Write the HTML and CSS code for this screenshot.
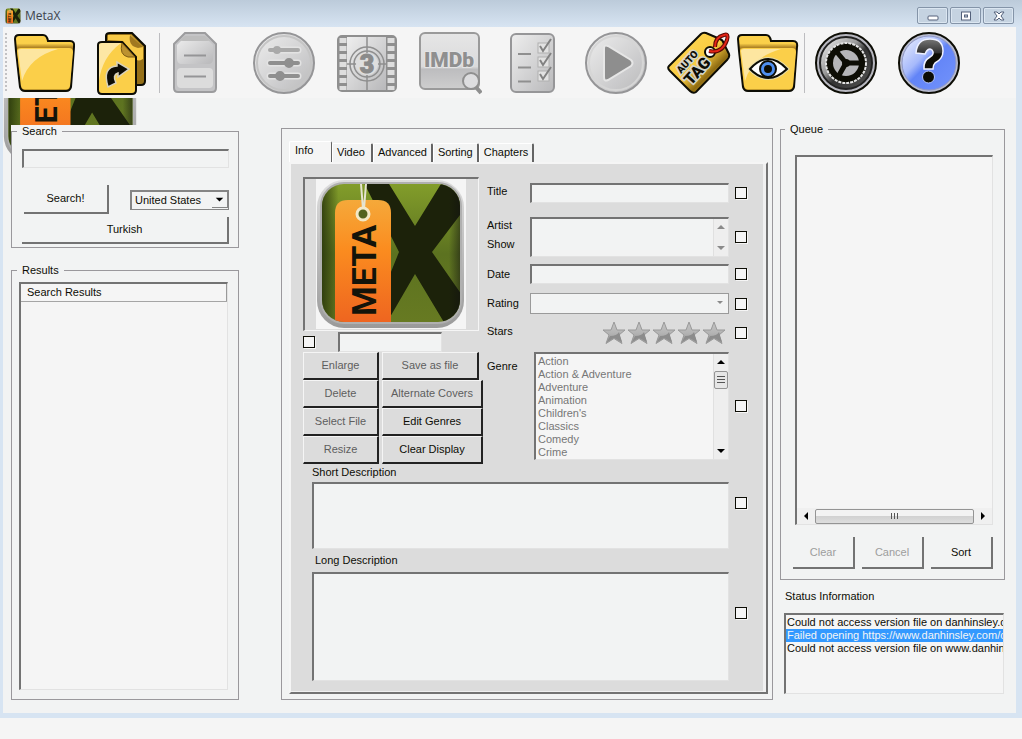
FILE: index.html
```html
<!DOCTYPE html>
<html lang="en">
<head>
<meta charset="utf-8">
<title>MetaX</title>
<link rel="stylesheet" href="styles.css">
</head>
<body>
<svg class="defs" width="0" height="0" aria-hidden="true">
  <defs>
    <linearGradient id="green" x1="0" y1="0" x2="0" y2="1"><stop offset="0" stop-color="#85a02b"/><stop offset=".5" stop-color="#5c7220"/><stop offset="1" stop-color="#687b22"/></linearGradient>
    <linearGradient id="orange" x1="0" y1="0" x2="0" y2="1"><stop offset="0" stop-color="#f5a93a"/><stop offset=".4" stop-color="#fb8c1f"/><stop offset="1" stop-color="#ee6420"/></linearGradient>
    <linearGradient id="edge" x1="0" y1="0" x2="1" y2="0"><stop offset="0" stop-color="#25320a" stop-opacity=".8"/><stop offset=".12" stop-color="#25320a" stop-opacity="0"/><stop offset=".92" stop-color="#111" stop-opacity="0"/><stop offset="1" stop-color="#111" stop-opacity=".5"/></linearGradient>
    <linearGradient id="rim" x1="0" y1="0" x2="0" y2="1"><stop offset="0" stop-color="#dedede"/><stop offset="1" stop-color="#9a9a9a"/></linearGradient>
    <linearGradient id="gold" x1="0" y1="0" x2="1" y2="1"><stop offset="0" stop-color="#fff0b8"/><stop offset=".42" stop-color="#fbdd7c"/><stop offset=".43" stop-color="#fbd04a"/><stop offset="1" stop-color="#fbcb40"/></linearGradient>
    <linearGradient id="goldtag" x1="0" y1="0" x2="1" y2="1"><stop offset="0" stop-color="#ffdc5c"/><stop offset=".5" stop-color="#f9cb40"/><stop offset=".68" stop-color="#8f6c12"/><stop offset=".9" stop-color="#f0c846"/></linearGradient>
    <linearGradient id="brown" x1="0" y1="0" x2="0" y2="1"><stop offset="0" stop-color="#fbd04a"/><stop offset=".15" stop-color="#fbd04a"/><stop offset=".22" stop-color="#b08424"/><stop offset="1" stop-color="#8a6514"/></linearGradient>
    <linearGradient id="gray" x1="0" y1="0" x2="1" y2="1"><stop offset="0" stop-color="#eeeeee"/><stop offset=".5" stop-color="#d4d4d5"/><stop offset="1" stop-color="#b8b8ba"/></linearGradient>
    <linearGradient id="grayv" x1="0" y1="0" x2="0" y2="1"><stop offset="0" stop-color="#e6e6e6"/><stop offset=".6" stop-color="#dadadb"/><stop offset=".65" stop-color="#bdbdbf"/><stop offset="1" stop-color="#cecece"/></linearGradient>
    <linearGradient id="dark" x1="0" y1="0" x2="1" y2="1"><stop offset="0" stop-color="#fafafa"/><stop offset=".4" stop-color="#999"/><stop offset=".55" stop-color="#333"/><stop offset="1" stop-color="#555"/></linearGradient>
    <linearGradient id="blue" x1="0" y1="0" x2="1" y2="1"><stop offset="0" stop-color="#f1f4ff"/><stop offset=".38" stop-color="#a6b9fb"/><stop offset=".5" stop-color="#6284f7"/><stop offset="1" stop-color="#7393fb"/></linearGradient>
    <linearGradient id="ink" x1="0" y1="0" x2="0" y2="1"><stop offset="0" stop-color="#777"/><stop offset=".45" stop-color="#333"/><stop offset=".5" stop-color="#0d0d05"/></linearGradient>
    <linearGradient id="starfill" x1="0" y1="0" x2="0" y2="1"><stop offset="0" stop-color="#c4c4c4"/><stop offset=".5" stop-color="#b4b4b4"/><stop offset="1" stop-color="#999"/></linearGradient>
    <clipPath id="tile"><rect x="6" y="5" width="138" height="138" rx="22"/></clipPath>
  </defs>
  <symbol id="logo" viewBox="0 0 150 150">
    <rect x="1" y="1" width="147" height="148" rx="27" fill="url(#rim)"/>
    <rect x="4" y="3" width="142" height="142" rx="24" fill="#b0b0b0"/>
    <g clip-path="url(#tile)">
      <rect width="150" height="150" fill="url(#green)"/>
      <path d="M46 0H70L99 47L128 0H150V28L116 73L150 122V150H132L99 95L70 145H54L83 73Z" fill="#1c220a"/>
      <rect x="6" y="5" width="138" height="138" fill="url(#edge)"/>
      <path d="M19 34Q19 21 32 21H62Q75 21 75 34V145H19Z" fill="url(#orange)"/>
      <path d="M45 5L47 30M50 5L48 30" stroke="#e5e3d0" stroke-width="2" fill="none"/>
      <circle cx="47" cy="35" r="6" fill="#53631f" stroke="#f3e8c6" stroke-width="3"/>
    </g>
    <text class="logo-text" transform="translate(60 137) rotate(-90)">META</text>
  </symbol>
  <symbol id="folder" viewBox="0 0 64 64">
    <path d="M2 8Q2 4 6 4H30Q34 4 35 10H57Q62 10 61 16L58 56Q57 60 53 60H12Q8 60 7 56L3 20Z" fill="url(#brown)" stroke="#0d0d05" stroke-width="2"/>
    <path d="M4 20Q4 17 8 17H56Q60 17 60 21L57 55Q56 58.500 53 58.500H12Q9 58.500 8 55Z" fill="#fbcf49"/>
    <path d="M5 20Q5 18 8 18H45Q16 26 9 50Z" fill="#fff" opacity=".48"/>
  </symbol>
  <symbol id="star" viewBox="0 0 24 24">
    <path d="M12 1L15 9H23L17 14L20 22.500L12 17.500L4 22.500L7 14L1 9H9Z" fill="url(#starfill)" stroke="#999" stroke-width="1"/>
    <path d="M5 21L8 15Q15 15 17 11L20 21L12 17Z" fill="#8c8c8c"/>
  </symbol>
</svg>

<div class="window">
  <header class="titlebar">
    <svg class="app-icon" viewBox="0 0 150 150" aria-hidden="true"><use href="#logo"/></svg>
    <h1 class="app-title">MetaX</h1>
    <div class="window-buttons">
      <button type="button" class="winbtn" aria-label="Minimize"><svg width="14" height="12" viewBox="0 0 14 12"><rect x="2" y="6" width="10" height="4" rx="1" fill="#fff" stroke="#54617a"/></svg></button>
      <button type="button" class="winbtn" aria-label="Maximize"><svg width="14" height="12" viewBox="0 0 14 12"><rect x="2.500" y="2" width="9" height="8" fill="#fff" stroke="#54617a"/><rect x="5.500" y="5" width="3" height="2" fill="#cbd6e2" stroke="#54617a"/></svg></button>
      <button type="button" class="winbtn" aria-label="Close"><svg width="14" height="12" viewBox="0 0 14 12"><path d="M2 2H5L7 4L9 2H12L9 6L12 10H9L7 8L5 10H2L5 6Z" fill="#fff" stroke="#54617a"/></svg></button>
    </div>
  </header>

  <nav class="toolbar" aria-label="Main tools">
    <span class="grip"></span>
    <button type="button" class="tool" aria-label="Open folder"><svg viewBox="0 0 64 64"><use href="#folder"/></svg></button>
    <button type="button" class="tool after-folder" aria-label="Open files"><svg viewBox="0 0 64 64">
      <path d="M16 5Q16 2 20 2H42L55 15V50Q55 54 51 54H20Q16 54 16 50Z" fill="#957018" stroke="#0d0d05" stroke-width="2"/>
      <path d="M18 4H41L53 16V28Q46 32 46 26L33 10L18 9Z" fill="#f7ca48"/><path d="M40 4Q38 15 48 17L53 16Z" fill="#a07820"/>
      <path d="M8 14Q8 11 12 11H32L46 26V59Q46 63 42 63H12Q8 63 8 59Z" fill="#fbcf49" stroke="#0d0d05" stroke-width="2"/>
      <path d="M9 14Q9 12 12 12H31Q12 26 9 50Z" fill="#fff" opacity=".5"/>
      <path d="M32 12Q29 24 38 26L45 26Z" fill="#bc9230" stroke="#7d5b12" stroke-width="1"/>
      <path d="M18 56Q12 36 27 35V31L39 38L28 46V42Q22 44 26 52Z" fill="#0d0d05" stroke="#d7d2bd" stroke-width="1.500"/></svg></button>
    <span class="separator"></span>
    <button type="button" class="tool" aria-label="Save" disabled><svg viewBox="0 0 64 64">
      <path d="M11 13L22 2H42L53 13V57Q53 61 49 61H15Q11 61 11 57Z" fill="#c4c4c6" stroke="#9c9c9e" stroke-width="2"/>
      <path d="M14 14L22 6H42L50 14V28Q50 33 45 33H19Q14 33 14 28Z" fill="url(#gray)"/>
      <path d="M14 12Q16 9 20 10H44Q48 9 50 12L42 5H22Z" fill="#bdbdbd"/>
      <rect x="14" y="37" width="36" height="20" rx="4" fill="#dcdcdc"/>
      <path d="M21 24.500H43M21 45.500H43" stroke="#959597" stroke-width="2"/></svg></button>
    <div class="tool-group">
      <button type="button" class="tool" aria-label="Adjust" disabled><svg viewBox="0 0 64 64">
        <circle cx="32" cy="32" r="30" fill="url(#gray)" stroke="#959597" stroke-width="2"/><circle cx="32" cy="32" r="27" fill="none" stroke="#c5c5c5" stroke-width="2"/>
        <g stroke="#e3e3e3" stroke-width="7" stroke-linecap="round"><path d="M18 19H46M18 32H46M18 45H46"/></g>
        <g stroke="#8f8f8f" fill="#8f8f8f" stroke-width="4" stroke-linecap="round"><path d="M18 32H46M18 45H46"/><path d="M18 19H46" stroke="#a9a9a9"/><circle cx="25" cy="19" r="2" stroke="#a9a9a9"/><circle cx="37" cy="32" r="3"/><circle cx="28" cy="45" r="3"/></g></svg></button>
      <button type="button" class="tool" aria-label="Movie" disabled><svg viewBox="0 0 64 64">
        <rect x="3" y="5" width="58" height="55" rx="4" fill="#8f8f8f" stroke="#8f8f8f" stroke-width="2"/><rect x="12" y="6" width="39" height="53" fill="url(#gray)"/>
        <g stroke="#dedede" stroke-width="7" stroke-dasharray="5 3"><path d="M8 7V59M56 7V59"/></g>
        <g fill="none" stroke="#8f8f8f" stroke-width="1.500"><circle cx="32" cy="33" r="17"/><circle cx="32" cy="33" r="13"/><path d="M12 33H51M32 6V59"/></g>
        <circle cx="32" cy="33" r="11" fill="#dedede"/><text x="32" y="42" class="reel-number">3</text></svg></button>
      <button type="button" class="tool" aria-label="IMDb search" disabled><svg viewBox="0 0 64 64">
        <rect x="2" y="2" width="59" height="56" rx="5" fill="url(#grayv)" stroke="#9a9a9a" stroke-width="2"/>
        <text x="31" y="36" class="imdb-text">IMDb</text><path d="M57 55L63 62" stroke="#8f8f8f" stroke-width="4"/><circle cx="53" cy="50" r="8" fill="#dddddf" stroke="#8f8f8f" stroke-width="2"/></svg></button>
      <button type="button" class="tool" aria-label="Checklist" disabled><svg viewBox="0 0 64 64">
        <rect x="10" y="3" width="43" height="58" rx="5" fill="url(#gray)" stroke="#969698" stroke-width="2"/>
        <path d="M17 23H30M17 36.500H30M17 50.500H30" stroke="#8f8f8f" stroke-width="2"/>
        <g fill="#e2e2e2" stroke="#b0b0b0"><rect x="37" y="12" width="11" height="10"/><rect x="37" y="26" width="11" height="10"/><rect x="37" y="40" width="11" height="10"/></g>
        <g fill="none" stroke="#828282" stroke-width="2"><path d="M39 15L42 20L50 8M39 29L42 34L50 22M39 43L42 48L50 36"/></g></svg></button>
      <button type="button" class="tool" aria-label="Play" disabled><svg viewBox="0 0 64 64">
        <circle cx="32" cy="32" r="30" fill="url(#gray)" stroke="#959597" stroke-width="2"/><circle cx="32" cy="32" r="27" fill="none" stroke="#d6d6d6" stroke-width="2"/>
        <path d="M20 18Q20 13 24 15L47 29Q50 32 47 35L24 49Q20 51 20 46Z" fill="#8e8e8e" stroke="#e6e6e6" stroke-width="2"/></svg></button>
      <button type="button" class="tool" aria-label="Auto tag"><svg viewBox="0 0 64 64">
        <path d="M2 35L34 3Q36 1 39 2L53 8Q56 9 57 13L62 23Q63 26 60 29L29 61Q26 63 23 60L3 40Q0 37 2 35Z" fill="url(#goldtag)" stroke="#0d0d05" stroke-width="2"/>
        <circle cx="43" cy="21" r="5" fill="#fff" stroke="#0d0d05" stroke-width="2"/>
        <path d="M42 20Q55 23 60 9Q62 2 57 4Q48 6 48 16" fill="none" stroke="#5b0904" stroke-width="4"/><path d="M42 20Q55 23 60 9Q62 2 57 4Q48 6 48 16" fill="none" stroke="#e42517" stroke-width="2"/>
        <text transform="translate(14 43) rotate(-48)" class="tag-small">AUTO</text><text transform="translate(24 55) rotate(-48)" class="tag-big">TAG</text></svg></button>
    </div>
    <button type="button" class="tool after-tag" aria-label="Watch folder"><svg viewBox="0 0 64 64"><use href="#folder"/>
      <path d="M14 38Q32 18 51 38Q32 56 14 38Z" fill="#fff" stroke="#e6dca8" stroke-width="4"/><path d="M14 38Q32 18 51 38Q32 56 14 38Z" fill="#fff" stroke="#0d0d05" stroke-width="2"/>
      <circle cx="32" cy="38" r="8" fill="#4f8ff0" stroke="#0d0d05" stroke-width="2"/><circle cx="32" cy="38" r="4" fill="#0d0d05"/></svg></button>
    <span class="separator"></span>
    <div class="tool-group last">
      <button type="button" class="tool" aria-label="Settings"><svg viewBox="0 0 64 64">
        <circle cx="32" cy="32" r="30" fill="#b8b8c0" stroke="#0d0d05" stroke-width="2"/><circle cx="32" cy="32" r="26" fill="url(#dark)" stroke="#222" stroke-width="2"/>
        <circle cx="32" cy="32" r="20" fill="#0d0d05" stroke="#e4e4e4" stroke-width="2" stroke-dasharray="3 1"/>
        <circle cx="32" cy="32" r="13" fill="#b5b5b8"/><path d="M32 32L22 20M32 32H48M32 32L24 46" stroke="#0d0d05" stroke-width="5"/><circle cx="32" cy="32" r="4" fill="#0d0d05"/></svg></button>
      <button type="button" class="tool" aria-label="Help"><svg viewBox="0 0 64 64">
        <circle cx="32" cy="32" r="30" fill="#b9bcce" stroke="#0d0d05" stroke-width="2"/><circle cx="32" cy="32" r="27" fill="url(#blue)" stroke="#8f98c8" stroke-width="1"/>
        <path d="M19 22Q20 8 33 8Q46 8 46 20Q46 28 38 32Q36 34 36 38H27Q26 30 33 26Q38 23 35 19Q31 16 28 23Z" fill="url(#ink)" stroke="#eef1ff" stroke-width="1.500"/><circle cx="31.500" cy="46" r="6" fill="#0d0d05" stroke="#b5c6ff" stroke-width="1"/></svg></button>
    </div>
  </nav>

  <main class="workspace">
    <svg class="backdrop" viewBox="0 0 150 150" aria-hidden="true"><use href="#logo"/></svg>

    <div class="left-column">
      <fieldset class="group search-group">
        <legend>Search</legend>
        <input type="text" class="sunken search-input" aria-label="Search text">
        <div class="search-row">
          <button type="button" class="soft-button">Search!</button>
          <span class="combo"><select class="country" aria-label="Country"><option>United States</option></select><svg class="combo-arrow" viewBox="0 0 16 16" aria-hidden="true"><path d="M4 6H12L8 10Z"/></svg></span>
        </div>
        <button type="button" class="soft-button turkish">Turkish</button>
      </fieldset>
      <fieldset class="group results-group">
        <legend>Results</legend>
        <div class="sunken results"><table class="results-table"><thead><tr><th scope="col">Search Results</th></tr></thead></table></div>
      </fieldset>
    </div>

    <section class="middle-column">
      <div class="tabs" role="tablist">
        <button type="button" role="tab" class="tab active" aria-selected="true">Info</button>
        <button type="button" role="tab" class="tab video">Video</button>
        <button type="button" role="tab" class="tab">Advanced</button>
        <button type="button" role="tab" class="tab">Sorting</button>
        <button type="button" role="tab" class="tab">Chapters</button>
      </div>
      <div class="tab-panel" role="tabpanel">
        <div class="info">
          <div class="cover-side">
            <div class="cover"><svg viewBox="0 0 150 150" role="img" aria-label="MetaX cover"><use href="#logo"/></svg></div>
            <div class="cover-row"><input type="checkbox" aria-label="Use cover"><input type="text" class="sunken cover-input" aria-label="Cover size"></div>
            <div class="button-grid">
              <button type="button" class="hard-button" disabled>Enlarge</button><button type="button" class="hard-button save" disabled>Save as file</button>
              <button type="button" class="hard-button" disabled>Delete</button><button type="button" class="hard-button" disabled>Alternate Covers</button>
              <button type="button" class="hard-button" disabled>Select File</button><button type="button" class="hard-button">Edit Genres</button>
              <button type="button" class="hard-button" disabled>Resize</button><button type="button" class="hard-button">Clear Display</button>
            </div>
          </div>
          <div class="fields">
            <label for="title" class="raised">Title</label><input id="title" type="text" class="sunken line"><input type="checkbox" aria-label="Use title">
            <label for="artist" class="raised two-line">Artist<br>Show</label>
            <div class="sunken artist-box"><textarea id="artist"></textarea><span class="vbar faded"><svg viewBox="0 0 8 4"><path d="M0 4L4 0L8 4Z"/></svg><svg viewBox="0 0 8 4"><path d="M0 0H8L4 4Z"/></svg></span></div><input type="checkbox" aria-label="Use artist">
            <label for="date">Date</label><input id="date" type="text" class="sunken line"><input type="checkbox" aria-label="Use date">
            <label for="rating">Rating</label><span class="combo rating-combo"><select id="rating" class="rating" disabled><option></option></select><svg class="combo-arrow" viewBox="0 0 16 16" aria-hidden="true"><path d="M5 6H11L8 9Z"/></svg></span><input type="checkbox" aria-label="Use rating">
            <span class="raised">Stars</span>
            <div class="stars" role="img" aria-label="No stars"><svg><use href="#star"/></svg><svg><use href="#star"/></svg><svg><use href="#star"/></svg><svg><use href="#star"/></svg><svg><use href="#star"/></svg></div><input type="checkbox" aria-label="Use stars">
            <label for="genre" class="genre-label">Genre</label>
            <div class="sunken genre-box"><select id="genre" size="8" disabled><option>Action</option><option>Action &amp; Adventure</option><option>Adventure</option><option>Animation</option><option>Children's</option><option>Classics</option><option>Comedy</option><option>Crime</option></select><span class="vbar"><svg viewBox="0 0 8 4"><path d="M0 4L4 0L8 4Z"/></svg><span class="vthumb"></span><svg class="down" viewBox="0 0 8 4"><path d="M0 0H8L4 4Z"/></svg></span></div><input type="checkbox" class="genre-check" aria-label="Use genre">
          </div>
        </div>
        <label for="short" class="desc-label">Short Description</label>
        <div class="desc-row"><textarea id="short" class="sunken short"></textarea><input type="checkbox" class="short-check" aria-label="Use short description"></div>
        <label for="long" class="desc-label long-label">Long Description</label>
        <div class="desc-row long-row"><textarea id="long" class="sunken"></textarea><input type="checkbox" class="long-check" aria-label="Use long description"></div>
      </div>
    </section>

    <div class="right-column">
      <fieldset class="group queue-group">
        <legend>Queue</legend>
        <div class="sunken queue-list"><div class="hbar"><svg viewBox="0 0 4 8"><path d="M4 0V8L0 4Z"/></svg><span class="hthumb"></span><svg viewBox="0 0 4 8"><path d="M0 0V8L4 4Z"/></svg></div></div>
        <div class="queue-buttons"><button type="button" class="soft-button" disabled>Clear</button><button type="button" class="soft-button" disabled>Cancel</button><button type="button" class="soft-button">Sort</button></div>
      </fieldset>
      <h2 class="status-title">Status Information</h2>
      <ul class="sunken status-list">
        <li>Could not access version file on danhinsley.co</li>
        <li class="selected">Failed opening https://www.danhinsley.com/c</li>
        <li>Could not access version file on www.danhins</li>
      </ul>
    </div>
  </main>
</div>
</body>
</html>
```
FILE: styles.css
```css
* { box-sizing: border-box; }
html, body { margin: 0; height: 100%; }
body { background: #f5f5f5; color: #0d0d05; font: 11px/13px "Liberation Sans", Arial, sans-serif; padding-bottom: 21px; display: flex; flex-direction: column; }
button, input, select, textarea { font: inherit; color: inherit; margin: 0; padding: 0; border: 0; border-radius: 0; background: none; }
.defs { position: absolute; }
.window { flex: 1; display: flex; flex-direction: column; min-height: 0; background: #d7e4f2; padding: 0 6px 5px 3px; }

.titlebar { height: 27px; margin: 0 -6px 0 -3px; padding: 4px 8px 0 5px; display: flex; align-items: center; background: linear-gradient(#bccbda, #d7e4f2); }
.app-icon { width: 16px; height: 16px; }
.app-title { margin: 0 0 0 4px; font: 12px/16px "Open Sans", "Noto Sans", sans-serif; color: #3c434c; }
.window-buttons { margin-left: auto; display: flex; gap: 2px; }
.winbtn { width: 31px; height: 17px; border: 1px solid #8494a8; border-radius: 2px; box-shadow: inset 0 0 0 1px #dbe6f1; background: #c5d3e1; display: flex; align-items: center; justify-content: center; }

.toolbar { height: 71px; display: flex; align-items: center; background: #f5f5f5; }
.grip { width: 2px; height: 60px; margin: 0 6px 0 2px; background: repeating-linear-gradient(#c2c2c4 0 2px, transparent 2px 4px); }
.tool { width: 64px; height: 64px; flex: none; }
.tool svg { display: block; width: 64px; height: 64px; }
.after-folder { margin-left: 13px; }
.after-tag { margin-left: 5px; }
.separator { width: 1px; height: 60px; margin: 0 3px 0 5px; background: #bdbdc0; }
.tool-group { display: flex; gap: 19px; margin-left: 25px; }
.after-tag + .separator { margin-left: 4px; }
.tool-group.last { margin-left: 6px; }
.logo-text { font: 700 34px Roboto, sans-serif; fill: #14140a; }
.reel-number { font: 900 25px Roboto, sans-serif; fill: #8a8a8a; stroke: #8a8a8a; text-anchor: middle; }
.imdb-text { font: 900 21px Roboto, sans-serif; fill: #8f8f8f; text-anchor: middle; stroke: #e4e4e4; stroke-width: 2px; paint-order: stroke; }
.tag-small, .tag-big { font: 900 10px Roboto, sans-serif; fill: #0d0d05; stroke: #d4d4c8; stroke-width: 3px; paint-order: stroke; }
.tag-big { font-size: 16px; }

.workspace { position: relative; z-index: 0; overflow: hidden; flex: 1; min-height: 0; display: grid; grid-template-columns: 228px minmax(0, 1fr) 225px; padding: 0 11px 13px 8px; background: #f2f3f3; }
.backdrop { position: absolute; z-index: -1; left: 0; top: -71px; width: 135px; height: 135px; }
.group { margin: 0; min-width: 0; border: 1px solid #9a989c; }
legend { padding: 0 5px; line-height: 13px; }
.sunken { border: 1px solid #e2e2e2; border-top: 2px solid #737373; border-left: 2px solid #737373; }
.soft-button { height: 29px; border-right: 2px solid #737373; border-bottom: 2px solid #737373; }
.soft-button:disabled { color: #9d9d9d; }

.left-column { margin-top: 27px; display: flex; flex-direction: column; gap: 16px; min-height: 0; background: #f2f3f3; }
.search-group { padding: 11px 9px 3px 10px; }
.search-group legend { margin-left: -5px; }
.search-input { display: block; width: 100%; height: 19px; }
.search-row { display: flex; align-items: center; justify-content: space-between; margin: 17px 0 3px 2px; }
.search-row .soft-button { width: 85px; }
.turkish { display: block; width: 100%; height: 27px; }
.combo { position: relative; display: flex; }
.combo select { appearance: none; width: 100%; }
.country { height: 20px; padding: 0 20px 0 3px; border: 1px solid #858585; border-top-width: 2px; border-left-width: 2px; }
.search-row .combo { width: 99px; }
.combo-arrow { position: absolute; right: 1px; top: 2px; width: 16px; height: 16px; pointer-events: none; border-right: 1px solid #858585; border-bottom: 1px solid #858585; }
.results-group { flex: 1; display: flex; padding: 5px 10px 9px 7px; min-height: 0; }
.results-group legend { margin-left: -2px; }
.results { flex: 1; background: #f5f5f5; }
.results-table { width: 100%; border-collapse: collapse; }
.results-table th { height: 17px; padding: 1px 0 0 6px; font-weight: 400; text-align: left; border-right: 1px solid #999; border-bottom: 1px solid #a5a5a5; }

.middle-column { margin: 30px 7px 0 42px; padding: 12px 4px 5px 7px; border: 1px solid #9a989c; display: flex; flex-direction: column; min-height: 0; }
.tabs { display: flex; align-items: flex-end; height: 21px; }
.tab { height: 19px; padding: 0 4px 2px; border: 1px solid #fff; border-bottom: 0; border-right: 2px solid #646464; border-radius: 2px 2px 0 0; }
.tab.video { padding: 0 6px 2px 4px; }
.tab.active { height: 21px; width: 43px; padding: 0 0 4px 5px; text-align: left; background: #f5f5f5; border-right-width: 1px; }
.tab-panel { flex: 1; min-height: 0; display: flex; flex-direction: column; padding: 13px 19px 11px 12px; background: #dcdcdc; border: 2px solid #737373; border-top: 2px solid #f5f5f5; border-left: 2px solid #f5f5f5; box-shadow: inset -3px -1px #f0f0f0; }
.info { display: flex; gap: 4px; }
.cover-side { width: 180px; }
.cover { width: 176px; height: 154px; padding-left: 11px; border: 1px solid #f5f5f5; border-top: 2px solid #737373; border-left: 2px solid #737373; }
.cover svg { display: block; width: 150px; height: 150px; background: #f5f5f5; }
.cover-row { display: flex; align-items: center; gap: 23px; height: 21px; }
.cover-input { width: 104px; height: 20px; background: #f2f3f3; }
input[type="checkbox"] { appearance: none; width: 12px; height: 12px; flex: none; border: 1px solid #0d0d05; background: #f5f5f5; box-shadow: 1px 1px #f5f5f5; }
.button-grid { display: grid; grid-template-columns: 76px 101px; gap: 0 3px; grid-auto-rows: 28px; }
.hard-button { border-top: 1px solid #f5f5f5; border-left: 1px solid #f5f5f5; border-right: 2px solid #222; border-bottom: 2px solid #222; }
.hard-button:disabled { color: #5e5e5e; }
.hard-button.save { margin-right: 4px; }
.fields { flex: 1; display: grid; grid-template-columns: 43px minmax(0, 1fr) 18px; grid-template-rows: 32px 55px 20px 39px 20px 117px; align-items: center; }
.fields > input[type="checkbox"] { justify-self: end; }
.raised { padding-bottom: 4px; }
.line { width: 100%; height: 20px; background: #f2f3f3; }
.two-line { line-height: 19px; }
.artist-box { height: 40px; display: flex; background: #f2f3f3; }
.artist-box textarea { flex: 1; min-width: 0; resize: none; }
.vbar { width: 15px; display: flex; flex-direction: column; align-items: center; justify-content: space-between; padding: 6px 0; background: #eee; border-left: 1px solid #e0e0e0; }
.vbar svg { width: 8px; height: 4px; flex: none; }
.faded svg { fill: #8a8a8a; }
.vthumb { width: 14px; height: 18px; margin: 7px 0 auto; border: 1px solid #949494; border-radius: 2px; background: repeating-linear-gradient(#555 0 1px, transparent 1px 3px) center / 8px 8px no-repeat #e6e6e6; }
.rating { height: 21px; border: 1px solid #9a9a9a; background: #f2f3f3; opacity: 1; }
.rating-combo .combo-arrow { border: 0; fill: #8a8a8a; }
.stars { display: flex; justify-content: flex-end; gap: 1px; padding-right: 3px; }
.stars svg { width: 24px; height: 24px; }
.genre-label { align-self: start; padding-top: 17px; }
.genre-box { align-self: end; height: 108px; margin-left: 4px; display: flex; background: #f5f5f5; overflow: hidden; }
.genre-box select { flex: 1; min-width: 0; height: 105px; padding-top: 1px; overflow: hidden; opacity: 1; scrollbar-width: none; }
.genre-box option { height: 13px; min-height: 13px; padding: 0 2px; line-height: 13px; color: #777; }
.genre-check { margin-top: 8px; }
.desc-label { margin: 2px 0 3px 9px; }
.desc-row { display: flex; align-items: center; gap: 6px; margin-left: 9px; }
.desc-row textarea { flex: 1; min-width: 0; resize: none; background: #f2f3f3; }
.short { height: 67px; }
.short-check { margin-bottom: 26px; }
.long-label { margin: 5px 0 5px 12px; }
.long-row { flex: 1; min-height: 0; }
.long-row textarea { height: 100%; }
.long-check { margin-bottom: 28px; }

.right-column { margin-top: 25px; display: flex; flex-direction: column; min-height: 0; }
.queue-group { flex: 1; min-height: 0; display: flex; flex-direction: column; padding: 19px 11px 10px 12px; }
.queue-group legend { margin-left: -8px; }
.queue-list { flex: 1; margin-left: 2px; display: flex; align-items: flex-end; background: #f5f5f5; min-height: 0; }
.hbar { flex: 1; height: 16px; padding: 0 7px; display: flex; align-items: center; justify-content: space-between; gap: 7px; background: #f0f0f0; }
.hbar svg { width: 4px; height: 8px; }
.hthumb { flex: 1; height: 15px; border: 1px solid #949494; border-radius: 2px; background: repeating-linear-gradient(90deg, #555 0 1px, transparent 1px 3px) center / 8px 6px no-repeat, linear-gradient(#f3f3f3 45%, #d2d2d2 50%, #dedede); }
.queue-buttons { display: grid; grid-template-columns: repeat(3, 1fr); gap: 7px; margin-top: 12px; }
.queue-buttons .soft-button { height: 32px; }
.status-title { margin: 10px 0 10px 5px; font: inherit; }
.status-list { height: 81px; margin: 0 1px 6px 4px; padding: 1px 0; list-style: none; overflow: hidden; background: #f5f5f5; white-space: nowrap; }
.status-list li { padding-left: 1px; overflow: hidden; }
.status-list .selected { background: #3399ff; color: #f5f5f5; }
```
